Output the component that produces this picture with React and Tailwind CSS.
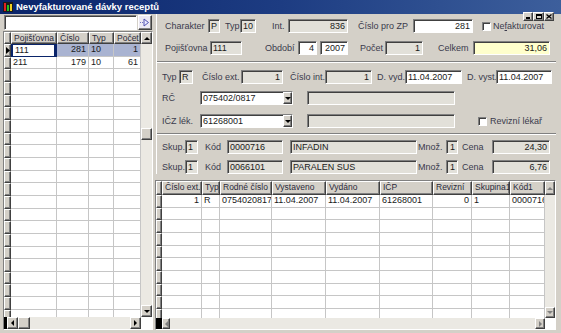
import React from 'react';

const sunk = 'border border-t-[#808080] border-l-[#808080] border-r-white border-b-white shadow-[inset_1px_1px_0_#404040]';
const raised = 'border border-t-white border-l-white border-r-[#404040] border-b-[#404040] shadow-[inset_-1px_-1px_0_#808080]';

const leftCols = [
  { label: 'Pojišťovna', w: 'w-[46px]' },
  { label: 'Číslo', w: 'w-[32px]', right: true },
  { label: 'Typ', w: 'w-[25px]' },
  { label: 'Počet', w: 'w-[27px]', right: true },
];
const leftRows = [
  ['111', '281', '10', '1'],
  ['211', '179', '10', '61'],
];

const rightCols = [
  { label: 'Číslo ext.', w: 'w-[40px]', right: true },
  { label: 'Typ', w: 'w-[18px]' },
  { label: 'Rodné číslo', w: 'w-[52px]' },
  { label: 'Vystaveno', w: 'w-[54px]' },
  { label: 'Vydáno', w: 'w-[54px]' },
  { label: 'IČP', w: 'w-[53px]' },
  { label: 'Revizní', w: 'w-[39px]', right: true },
  { label: 'Skupina1', w: 'w-[38px]' },
  { label: 'Kód1', w: 'w-[35px]' },
];
const rightRows = [
  ['1', 'R', '0754020817', '11.04.2007', '11.04.2007', '61268001', '0', '1', '0000716'],
];

function Arrow({ dir, color = '#000' }) {
  const d = {
    up: 'M0 3L3 0L6 3z',
    down: 'M0 0L6 0L3 3z',
    left: 'M3 0L3 6L0 3z',
    right: 'M0 0L3 3L0 6z',
  }[dir];
  const vert = dir === 'up' || dir === 'down';
  return (
    <svg width={vert ? 6 : 3} height={vert ? 3 : 6}>
      <path d={d} fill={color} />
    </svg>
  );
}

function Btn({ className = '', children }) {
  return (
    <div className={`${raised} flex shrink-0 items-center justify-center bg-[#d4d0c8] ${className}`}>
      {children}
    </div>
  );
}

function Box({ w, bg = 'bg-[#e2e0d9]', right, children }) {
  return (
    <div
      className={`${w} ${bg} ${sunk} h-[14px] shrink-0 overflow-hidden whitespace-nowrap px-[2px] leading-[12px] ${
        right ? 'text-right' : ''
      }`}
    >
      {children}
    </div>
  );
}

function Label({ w, ml = '', children }) {
  return <span className={`${w} ${ml} shrink-0 whitespace-nowrap leading-[14px] text-[#3a3a4c]`}>{children}</span>;
}

function Check({ ml }) {
  return <span className={`${ml} ${sunk} h-[9px] w-[9px] shrink-0 bg-white`} />;
}

function Combo({ children }) {
  return (
    <div className={`${sunk} flex h-[14px] w-[93px] shrink-0 bg-white`}>
      <span className="flex-1 px-[2px] leading-[12px]">{children}</span>
      <Btn className="h-full w-[9px]">
        <Arrow dir="down" />
      </Btn>
    </div>
  );
}

function Groove() {
  return <div className="h-[2px] shrink-0 border-t border-b border-t-[#808080] border-b-white" />;
}

function Grid({ cols, rows, count, headH, indW, vsW, hsH, upH, downH, blackW, lBtnW, rBtnW, hThumb, vThumb, arrowColor, selected }) {
  return (
    <div className={`${sunk} flex h-full flex-col bg-white`}>
      <div className="flex min-h-0 flex-1">
        <div className="min-w-0 flex-1 overflow-hidden">
          <div className={`flex ${headH}`}>
            <div className={`${indW} ${raised} shrink-0 bg-[#d4d0c8]`} />
            {cols.map((c) => (
              <div
                key={c.label}
                className={`${c.w} ${raised} shrink-0 overflow-hidden whitespace-nowrap bg-[#d4d0c8] pl-[2px] text-[8.5px] leading-[10px] text-[#2a2a3a]`}
              >
                {c.label}
              </div>
            ))}
          </div>
          {Array.from({ length: count }).map((_, i) => {
            const r = rows[i];
            const sel = selected && i === 0;
            return (
              <div key={i} className="flex h-[12.67px]">
                <div className={`${indW} ${raised} flex shrink-0 items-center bg-[#d4d0c8]`}>
                  {sel && (
                    <svg width="4" height="7" className="ml-[1px]">
                      <path d="M0 0L4 3.5L0 7z" fill="#000" />
                    </svg>
                  )}
                </div>
                {cols.map((c, j) => {
                  let cls = 'border-r border-b border-[#c6c6c6]';
                  if (sel && j === 0) cls = 'border-y border-l-2 border-r-[3px] border-[#0a246a] bg-white';
                  else if (sel) cls = 'border-r border-b border-[#c6c6c6] bg-[#a9b3d1]';
                  return (
                    <div
                      key={j}
                      className={`${c.w} ${cls} shrink-0 overflow-hidden whitespace-nowrap px-[2px] leading-[11px] ${
                        c.right ? 'text-right' : ''
                      }`}
                    >
                      {r ? r[j] : ''}
                    </div>
                  );
                })}
              </div>
            );
          })}
        </div>
        <div className={`${vsW} flex shrink-0 flex-col bg-[#ebe9e3]`}>
          <Btn className={upH}>
            <Arrow dir="up" color={arrowColor} />
          </Btn>
          <div className="flex-1">{vThumb && <div className={`${raised} mt-[84px] h-[12px] bg-[#d4d0c8]`} />}</div>
          <Btn className={downH}>
            <Arrow dir="down" color={arrowColor} />
          </Btn>
        </div>
      </div>
      <div className={`flex ${hsH} shrink-0 bg-[#ebe9e3]`}>
        <div className={`${blackW} shrink-0 bg-black`} />
        <Btn className={lBtnW}>
          <Arrow dir="left" color={arrowColor} />
        </Btn>
        {hThumb && <Btn className="w-[12px]" />}
        <div className="flex-1" />
        <Btn className={rBtnW}>
          <Arrow dir="right" color={arrowColor} />
        </Btn>
        <div className={`${vsW} shrink-0 bg-white`} />
      </div>
    </div>
  );
}

export default function App() {
  return (
    <div className="relative flex h-[333px] w-[561px] flex-col overflow-hidden bg-[#d4d0c8] font-['Liberation_Sans',Arial,sans-serif] text-[9px] text-[#1a1a1a]">
      {/* title bar */}
      <div className="flex h-[14px] shrink-0 items-center bg-linear-to-r from-[#0a246a] via-[#1d3c82] to-[#3d5f9c] pl-[3px]">
        <svg width="10" height="10" viewBox="0 0 10 10">
          <rect x="0" y="0" width="10" height="10" fill="#1a1a1a" />
          <rect x="1" y="1" width="2" height="8" fill="#e02020" />
          <rect x="4" y="3" width="2" height="6" fill="#20c020" />
          <rect x="7" y="2" width="2" height="7" fill="#f0d020" />
        </svg>
        <span className="ml-[3px] text-[9.5px] font-bold text-white">Nevyfakturované dávky receptů</span>
      </div>

      {/* window buttons */}
      <div className="absolute top-[12px] right-[7px] flex">
        <Btn className="h-[9px] w-[10px] items-end pb-[1px]">
          <span className="h-[2px] w-[4px] bg-black" />
        </Btn>
        <Btn className="h-[9px] w-[11px]">
          <span className="h-[5px] w-[6px] border border-t-2 border-black" />
        </Btn>
        <Btn className="h-[9px] w-[10px]">
          <svg width="6" height="5">
            <path d="M0.5 0.5L5.5 4.5M5.5 0.5L0.5 4.5" stroke="#000" strokeWidth="1.3" />
          </svg>
        </Btn>
      </div>

      <div className="flex min-h-0 flex-1">
        {/* left panel */}
        <div className="flex w-[153px] shrink-0 flex-col pl-[3px]">
          <div className="mt-[1px] ml-[1px] flex h-[15px]">
            <div className={`${sunk} h-full w-[133px] bg-white`} />
            <Btn className="ml-[1px] h-full w-[14px] bg-[#ece9f4]">
              <svg width="10" height="9" viewBox="0 0 10 9">
                <path d="M0 4.5H3" stroke="#7070c0" strokeDasharray="1 1" />
                <path d="M4 1L8.5 4.5L4 8z" fill="#e8e8ff" stroke="#5050b0" />
              </svg>
            </Btn>
          </div>
          <div className="mt-[1px] h-[299px] w-[150px]">
            <Grid
              cols={leftCols}
              rows={leftRows}
              count={22}
              headH="h-[12px]"
              indW="w-[7px]"
              vsW="w-[11px]"
              hsH="h-[12px]"
              upH="h-[12px]"
              downH="h-[12px]"
              blackW="w-[3px]"
              lBtnW="w-[11px]"
              rBtnW="w-[11px]"
              hThumb
              vThumb
              selected
            />
          </div>
        </div>

        {/* right panel */}
        <div className="flex min-w-0 flex-1 flex-col">
          <div className="ml-[3px] mr-[5px] flex flex-col border-l border-l-white">
            {/* section 1 */}
            <div className="flex flex-col pt-[5px] pb-[6px] pl-[8px]">
              <div className="flex items-center">
                <Label w="w-[43px]">Charakter</Label>
                <Box w="w-[12px]">P</Box>
                <Label w="w-[15px]" ml="ml-[5px]">Typ</Label>
                <Box w="w-[16px]">10</Box>
                <Label w="w-[16px]" ml="ml-[16px]">Int.</Label>
                <Box w="w-[60px]" right>836</Box>
                <Label w="w-[55px]" ml="ml-[10px]">Číslo pro ZP</Label>
                <Box w="w-[60px]" bg="bg-white" right>281</Box>
                <Check ml="ml-[9px]" />
                <span className="ml-[2px] leading-[14px] text-[#3a3a4c]">
                  Ne<span className="underline">f</span>akturovat
                </span>
              </div>
              <div className="mt-[8px] flex items-center">
                <Label w="w-[45px]">Pojišťovna</Label>
                <Box w="w-[32px]">111</Box>
                <Label w="w-[33px]" ml="ml-[23px]">Období</Label>
                <Box w="w-[19px]" bg="bg-white" right>4</Box>
                <span className="w-[3px] shrink-0" />
                <Box w="w-[28px]" bg="bg-white" right>2007</Box>
                <Label w="w-[25px]" ml="ml-[12px]">Počet</Label>
                <Box w="w-[38px]" right>1</Box>
                <Label w="w-[35px]" ml="ml-[15px]">Celkem</Label>
                <Box w="w-[77px]" bg="bg-[#ffffcc]" right>31,06</Box>
              </div>
            </div>
            <Groove />

            {/* section 2 */}
            <div className="flex flex-col pt-[7px] pb-[5px] pl-[5px]">
              <div className="flex items-center">
                <Label w="w-[17px]">Typ</Label>
                <Box w="w-[14px]">R</Box>
                <Label w="w-[39px]" ml="ml-[9px]">Číslo ext.</Label>
                <Box w="w-[42px]" right>1</Box>
                <Label w="w-[35px]" ml="ml-[7px]">Číslo int.</Label>
                <Box w="w-[47px]" right>1</Box>
                <Label w="w-[28px]" ml="ml-[5px]">D. vyd.</Label>
                <Box w="w-[57px]" bg="bg-white">11.04.2007</Box>
                <Label w="w-[29px]" ml="ml-[5px]">D. vyst.</Label>
                <Box w="w-[56px]" bg="bg-white">11.04.2007</Box>
              </div>
              <div className="mt-[7px] flex items-center">
                <Label w="w-[38px]">RČ</Label>
                <Combo>075402/0817</Combo>
                <span className="w-[14px] shrink-0" />
                <Box w="w-[148px]" />
              </div>
              <div className="mt-[9px] flex items-center">
                <Label w="w-[38px]">IČZ lék.</Label>
                <Combo>61268001</Combo>
                <span className="w-[14px] shrink-0" />
                <Box w="w-[148px]" />
                <Check ml="ml-[23px]" />
                <span className="ml-[3px] leading-[14px] text-[#3a3a4c]">Revizní lékař</span>
              </div>
            </div>
            <Groove />

            {/* section 3 */}
            <div className="flex flex-col pt-[5px] pl-[5px]">
              {[
                ['0000716', 'INFADIN', '24,30'],
                ['0066101', 'PARALEN SUS', '6,76'],
              ].map((r, i) => (
                <div key={i} className={`flex items-center ${i ? 'mt-[6px]' : ''}`}>
                  <Label w="w-[23px]">Skup.</Label>
                  <Box w="w-[13px]">1</Box>
                  <Label w="w-[22px]" ml="ml-[7px]">Kód</Label>
                  <Box w="w-[56px]">{r[0]}</Box>
                  <span className="w-[7px] shrink-0" />
                  <Box w="w-[127px]">{r[1]}</Box>
                  <Label w="w-[28px]" ml="ml-[1px]">Množ.</Label>
                  <Box w="w-[12px]" right>1</Box>
                  <Label w="w-[30px]" ml="ml-[4px]">Cena</Label>
                  <Box w="w-[58px]" right>{r[2]}</Box>
                </div>
              ))}
            </div>
          </div>

          <div className="mt-[6px] ml-[2px] h-[150px] w-[401px]">
            <Grid
              cols={rightCols}
              rows={rightRows}
              count={10}
              headH="h-[14px]"
              indW="w-[6px]"
              vsW="w-[10px]"
              hsH="h-[11px]"
              upH="h-[14px]"
              downH="h-[11px]"
              blackW="w-[6px]"
              lBtnW="w-[8px]"
              rBtnW="w-[10px]"
              arrowColor="#808080"
            />
          </div>
        </div>
      </div>
    </div>
  );
}
